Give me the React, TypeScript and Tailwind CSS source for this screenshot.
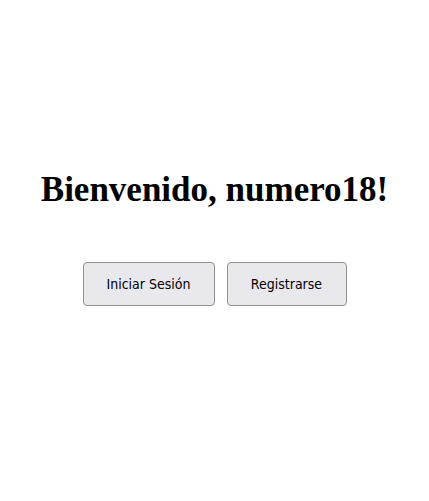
import React from "react";

const App: React.FC = () => {
  return (
    <div className="min-h-screen bg-white flex flex-col items-center pt-[170px]">
      <h1 className="text-[35px] leading-[40px] font-bold text-black font-['Liberation_Serif',serif]">
        Bienvenido, numero18!
      </h1>
      <div className="flex gap-3 mt-[52px]">
        <button className="w-[132px] h-[44px] bg-[#e9e9ed] border border-[#8f8f8f] rounded-[4px] text-[14px] text-black font-['DejaVu_Sans_Condensed','DejaVu_Sans',sans-serif]">
          Iniciar Sesión
        </button>
        <button className="w-[120px] h-[44px] bg-[#e9e9ed] border border-[#8f8f8f] rounded-[4px] text-[14px] text-black font-['DejaVu_Sans_Condensed','DejaVu_Sans',sans-serif]">
          Registrarse
        </button>
      </div>
    </div>
  );
};

export default App;
